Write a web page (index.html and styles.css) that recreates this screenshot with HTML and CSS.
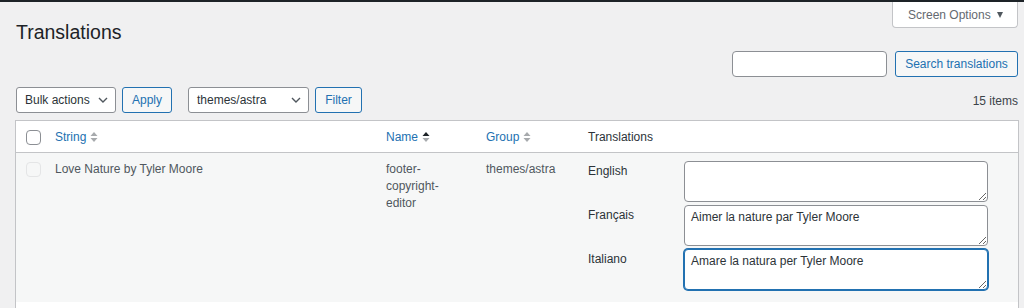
FILE: index.html
```html
<!DOCTYPE html>
<html lang="en">
<head>
<meta charset="utf-8">
<title>Translations</title>
<link rel="stylesheet" href="styles.css">
</head>
<body>
<div class="topbar"></div>
<div class="wrap">
  <div class="head">
    <h1 class="title">Translations</h1>
    <div class="screen-options">Screen Options <span class="tri"></span></div>
  </div>
  <div class="search-row">
    <div class="input"></div>
    <button class="btn">Search translations</button>
  </div>
  <div class="tablenav">
    <div class="actions">
      <div class="select sel-bulk"><span>Bulk actions</span><svg width="10" height="6" viewBox="0 0 10 6"><path d="M1 1 L5 5 L9 1" fill="none" stroke="#50575e" stroke-width="1.4"/></svg></div>
      <button class="btn btn-apply">Apply</button>
      <div class="select sel-group"><span>themes/astra</span><svg width="10" height="6" viewBox="0 0 10 6"><path d="M1 1 L5 5 L9 1" fill="none" stroke="#50575e" stroke-width="1.4"/></svg></div>
      <button class="btn btn-filter">Filter</button>
    </div>
    <div class="count">15 items</div>
  </div>
  <div class="table">
    <div class="row thead">
      <div class="cell c-cb"><span class="cb"></span></div>
      <div class="cell c-str"><a class="sort">String <svg class="arrows" width="8" height="12" viewBox="0 0 8 12"><path d="M4 1 L7.5 5 L0.5 5 Z" fill="#a7aaad"/><path d="M0.5 7 L7.5 7 L4 11 Z" fill="#a7aaad"/></svg></a></div>
      <div class="cell c-name"><a class="sort">Name <svg class="arrows" width="8" height="12" viewBox="0 0 8 12"><path d="M4 1 L7.5 5 L0.5 5 Z" fill="#1d2327"/><path d="M0.5 7 L7.5 7 L4 11 Z" fill="#a7aaad"/></svg></a></div>
      <div class="cell c-group"><a class="sort">Group <svg class="arrows" width="8" height="12" viewBox="0 0 8 12"><path d="M4 1 L7.5 5 L0.5 5 Z" fill="#a7aaad"/><path d="M0.5 7 L7.5 7 L4 11 Z" fill="#a7aaad"/></svg></a></div>
      <div class="cell c-tr">Translations</div>
    </div>
    <div class="row tbody alt">
      <div class="cell c-cb"><span class="cb cb-disabled"></span></div>
      <div class="cell c-str">Love Nature by Tyler Moore</div>
      <div class="cell c-name">footer-<br>copyright-<br>editor</div>
      <div class="cell c-group">themes/astra</div>
      <div class="cell c-tr">
        <div class="tr-list">
          <div class="tr-label">English</div>
          <textarea class="tr-area"></textarea>
          <div class="tr-label">Français</div>
          <textarea class="tr-area">Aimer la nature par Tyler Moore</textarea>
          <div class="tr-label">Italiano</div>
          <textarea class="tr-area focus">Amare la natura per Tyler Moore</textarea>
        </div>
      </div>
    </div>
    <div class="row tbody">
      <div class="cell c-cb"></div>
      <div class="cell c-str">&nbsp;</div>
    </div>
  </div>
</div>
</body>
</html>
```

FILE: styles.css
```css
* { box-sizing: border-box; }
html, body { margin: 0; padding: 0; }
body {
  background: #f0f0f1;
  font-family: "Liberation Sans", Arial, sans-serif;
  font-size: 12px;
  color: #3c434a;
  height: 308px;
  overflow: hidden;
}
.topbar { height: 2px; background: #1d2327; }
.wrap { padding: 0 5px 0 15px; }
.head {
  display: flex;
  justify-content: space-between;
  align-items: flex-start;
  height: 42px;
}
.title {
  margin: 18px 0 0 1px;
  font-size: 19.5px;
  line-height: 24px;
  font-weight: 400;
  color: #1d2327;
}
.screen-options {
  width: 126px;
  height: 26px;
  margin-right: 1px;
  background: #fff;
  border: 1px solid #c3c4c7;
  border-top: none;
  border-radius: 0 0 4px 4px;
  color: #646970;
  display: flex;
  align-items: center;
  padding-left: 15px;
  gap: 6px;
  line-height: 1;
}
.tri {
  width: 0; height: 0;
  border-left: 3.5px solid transparent;
  border-right: 3.5px solid transparent;
  border-top: 6px solid #50575e;
  margin-top: 1px;
}
.search-row {
  display: flex;
  justify-content: flex-end;
  gap: 8px;
  margin-top: 7px;
  margin-right: 1px;
}
.input {
  width: 155px;
  height: 26px;
  background: #fff;
  border: 1px solid #8c8f94;
  border-radius: 4px;
}
.btn {
  font-family: inherit;
  font-size: 12px;
  height: 26px;
  padding: 0 9px;
  border: 1px solid #2271b1;
  border-radius: 3px;
  background: #f6f7f7;
  color: #2271b1;
  line-height: 1;
}
.search-row .btn { width: 123px; padding: 0; }
.tablenav {
  display: flex;
  justify-content: space-between;
  align-items: center;
  margin-top: 10px;
  height: 26px;
}
.actions { display: flex; align-items: center; margin-left: 1px; }
.select {
  height: 26px;
  background: #fff;
  border: 1px solid #8c8f94;
  border-radius: 3px;
  display: flex;
  align-items: center;
  justify-content: space-between;
  padding: 0 8px 0 8px;
  color: #2c3338;
}
.sel-bulk { width: 100px; padding-right: 7px; }
.sel-group { width: 121px; padding-right: 7px; }
.btn-apply { width: 50px; margin-left: 6px; padding: 0; }
.sel-group { margin-left: 16px; }
.btn-filter { width: 47px; margin-left: 6px; padding: 0; }
.count { color: #3c434a; margin-right: 1px; padding-top: 1px; }
.table {
  margin-top: 7px;
  border: 1px solid #c3c4c7;
  background: #fff;
}
.row {
  display: grid;
  grid-template-columns: 31px 331px 100px 102px 1fr;
}
.thead {
  height: 32px;
  border-bottom: 1px solid #c3c4c7;
  align-items: center;
  color: #2c3338;
}
.cell { padding-left: 8px; }
.c-cb { padding-left: 10px; }
.thead .c-cb { display: flex; align-items: center; }
.thead .cell { padding-top: 1px; }
.cb {
  display: block;
  width: 15px;
  height: 15px;
  border: 1px solid #8c8f94;
  border-radius: 4px;
  background: #fff;
}
.cb-disabled { border-color: #e4e5e6; background: #f6f7f7; }
.sort {
  color: #2271b1;
  display: inline-flex;
  align-items: center;
  gap: 4px;
}
.arrows { display: block; }
.tbody {
  line-height: 17px;
  color: #50575e;
  padding: 8px 0 12px;
}
.tbody.alt { background: #f6f7f7; }
.tbody .c-cb { padding-top: 1px; }
.tbody .c-tr { padding-right: 30px; }
.tr-list {
  display: grid;
  grid-template-columns: 96px 1fr;
  row-gap: 3px;
}
.tr-label { padding-top: 2px; color: #2c3338; }
.tr-area {
  display: block;
  width: 100%;
  height: 41px;
  margin: 0;
  border: 1px solid #8c8f94;
  border-radius: 4px;
  background: #fff;
  font-family: "Liberation Sans", Arial, sans-serif;
  font-size: 12px;
  line-height: 17px;
  color: #2c3338;
  padding: 3px 6px;
  resize: vertical;
  outline: none;
}
.tr-area.focus {
  border-color: #2271b1;
  box-shadow: 0 0 0 1px #2271b1;
}
```
